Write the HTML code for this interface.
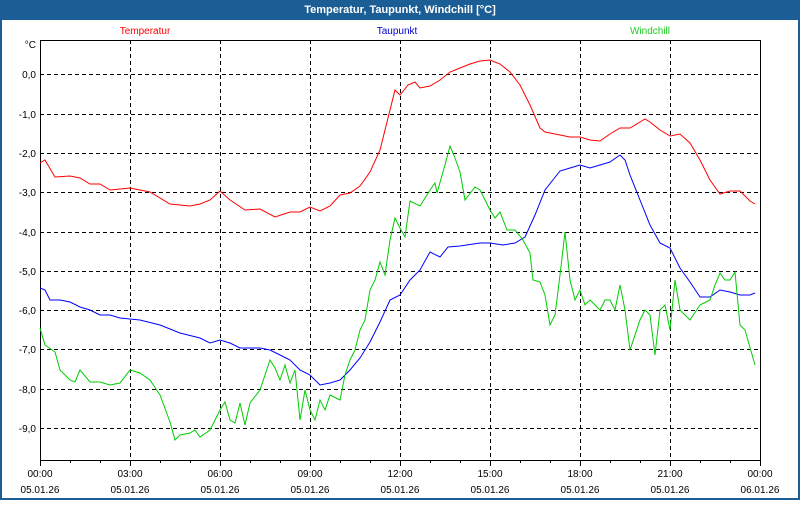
<!DOCTYPE html>
<html><head><style>
html,body{margin:0;padding:0;}
body{width:800px;height:500px;overflow:hidden;background:#fff;font-family:"Liberation Sans",sans-serif;}
</style></head><body>
<svg width="800" height="500" xmlns="http://www.w3.org/2000/svg" font-family="Liberation Sans, sans-serif" font-size="10">
<rect x="0" y="0" width="800" height="500" fill="#1b5e96"/>
<rect x="2" y="20" width="796" height="478" fill="#fff"/>
<text x="400" y="13" fill="#fff" font-weight="bold" font-size="11" text-anchor="middle">Temperatur, Taupunkt, Windchill [°C]</text>
<text x="145" y="34" fill="#ff0000" text-anchor="middle">Temperatur</text>
<text x="397" y="34" fill="#0000cc" text-anchor="middle">Taupunkt</text>
<text x="650" y="34" fill="#22cc22" text-anchor="middle">Windchill</text>
<text x="36" y="48" text-anchor="end">°C</text>
<g stroke="#000" stroke-dasharray="4,3" stroke-width="1">
<path d="M130.5 40V460M220.5 40V460M310.5 40V460M400.5 40V460M490.5 40V460M580.5 40V460M670.5 40V460"/>
<path d="M40 74.5H760M40 114.5H760M40 153.5H760M40 192.5H760M40 232.5H760M40 271.5H760M40 310.5H760M40 349.5H760M40 389.5H760M40 428.5H760"/>
</g>
<rect x="40.5" y="40.5" width="720" height="420" fill="none" stroke="#000"/>
<g stroke="#000"><path d="M40.5 460V466M70.5 460V463M100.5 460V463M130.5 460V466M160.5 460V463M190.5 460V463M220.5 460V466M250.5 460V463M280.5 460V463M310.5 460V466M340.5 460V463M370.5 460V463M400.5 460V466M430.5 460V463M460.5 460V463M490.5 460V466M520.5 460V463M550.5 460V463M580.5 460V466M610.5 460V463M640.5 460V463M670.5 460V466M700.5 460V463M730.5 460V463M760.5 460V466"/></g>
<g text-anchor="end">
<text x="36" y="78">0,0</text><text x="36" y="118">-1,0</text><text x="36" y="157">-2,0</text><text x="36" y="196">-3,0</text><text x="36" y="236">-4,0</text><text x="36" y="275">-5,0</text><text x="36" y="314">-6,0</text><text x="36" y="353">-7,0</text><text x="36" y="393">-8,0</text><text x="36" y="432">-9,0</text>
</g>
<g text-anchor="middle">
<text x="40" y="477">00:00</text><text x="130" y="477">03:00</text><text x="220" y="477">06:00</text><text x="310" y="477">09:00</text><text x="400" y="477">12:00</text><text x="490" y="477">15:00</text><text x="580" y="477">18:00</text><text x="670" y="477">21:00</text><text x="760" y="477">00:00</text>
<text x="40" y="493">05.01.26</text><text x="130" y="493">05.01.26</text><text x="220" y="493">05.01.26</text><text x="310" y="493">05.01.26</text><text x="400" y="493">05.01.26</text><text x="490" y="493">05.01.26</text><text x="580" y="493">05.01.26</text><text x="670" y="493">05.01.26</text><text x="760" y="493">06.01.26</text>
</g>
<polyline fill="none" stroke="#ff0000" points="40,163 45,160 55,177 70,176 80,178 90,184 100,184 110,190 130,188 150,192 170,204 190,206 200,204 210,200 220,191 230,200 245,210 260,209 275,217 290,212 300,212 310,207 320,211 330,206 340,195 350,193 360,186 370,172 380,150 390,110 395,90 400,95 408,85 415,82 420,88 430,86 440,80 450,72 460,68 470,64 480,61 490,60 500,64 510,72 520,85 530,105 540,128 545,132 560,135 570,137 580,137 590,140 600,141 610,134 620,128 630,128 640,122 645,119 650,122 660,130 670,136 680,134 690,143 700,160 710,180 720,194 730,191 740,191 750,201 755,204"/>
<polyline fill="none" stroke="#0000ff" points="40,288 45,290 50,300 60,300 70,302 80,307 90,310 100,315 110,315 120,318 140,320 160,325 180,333 200,338 210,343 220,340 230,343 240,348 260,348 270,350 280,355 290,360 300,370 310,375 320,385 330,383 340,380 350,370 360,358 370,342 380,322 390,300 400,295 410,280 420,270 430,252 440,257 448,247 460,246 480,243 490,243 503,245 515,243 525,237 535,215 545,190 560,171 570,168 580,165 590,168 600,165 610,162 620,155 625,160 630,175 640,200 650,225 660,243 670,248 680,268 690,282 700,297 710,297 720,290 730,292 740,295 750,295 755,293"/>
<polyline fill="none" stroke="#00cc00" points="40,328 45,345 55,352 60,370 70,380 75,382 80,370 90,382 100,382 110,385 120,383 130,370 140,373 150,380 160,395 170,422 175,440 180,435 190,433 195,430 200,437 210,430 215,420 220,410 225,402 230,420 235,423 240,403 245,425 250,403 260,390 265,375 270,360 275,368 280,380 285,365 290,383 295,370 300,420 305,390 310,410 315,420 320,400 325,410 330,395 340,400 345,375 350,360 355,350 360,330 365,320 370,290 375,280 380,262 385,275 390,240 395,218 400,228 405,237 410,201 420,206 430,190 435,183 437,193 445,165 450,146 455,158 460,172 465,200 475,187 480,190 490,210 495,218 500,212 507,230 515,230 523,240 530,253 533,280 540,282 545,295 550,325 555,315 560,275 565,232 570,280 575,300 580,290 585,305 590,300 600,310 605,300 610,300 615,310 620,285 625,310 630,350 640,320 645,310 650,315 655,355 660,310 665,305 670,330 675,280 680,310 690,320 700,305 710,300 715,285 720,273 725,280 730,280 735,272 740,325 745,330 755,365"/>
</svg>
</body></html>
